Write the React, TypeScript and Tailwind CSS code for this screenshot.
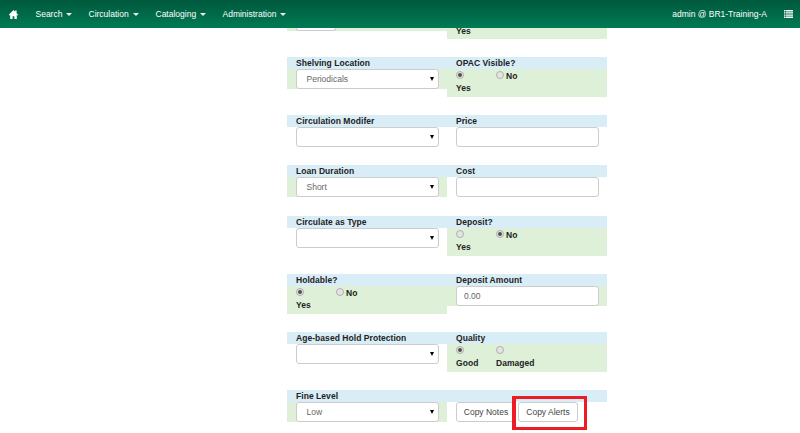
import React from "react";

const labelText = "text-[8.5px] font-bold tracking-[0.05px] text-[#222]";

function Caret() {
  return <span className="mt-px ml-[4px] h-0 w-0 border-x-[3px] border-t-[3px] border-x-transparent border-t-white/90" />;
}

function Menu({ label, width }: { label: string; width: string }) {
  return (
    <a className={`flex shrink-0 items-center ${width}`}>
      {label}
      <Caret />
    </a>
  );
}

function NavBar() {
  return (
    <nav className="flex h-[28px] items-center bg-gradient-to-b from-[#00593d] to-[#007a54] text-[8.5px] leading-[12px] text-white">
      <svg className="ml-[9px] mr-[17.5px] h-[9px] w-[9px] shrink-0" viewBox="0 0 9 9" fill="white">
        <path d="M4.5 0 0 4.6v.6h1.2V9h2.4V6.2h1.8V9h2.4V5.2H9v-.6L7.6 3.2V.6H6.2v1.2z" />
      </svg>
      <Menu label="Search" width="w-[53px]" />
      <Menu label="Circulation" width="w-[67px]" />
      <Menu label="Cataloging" width="w-[67px]" />
      <Menu label="Administration" width="w-[70px]" />
      <span className="mr-[17px] ml-auto">admin @ BR1-Training-A</span>
      <svg className="mr-[7px] h-[8px] w-[9px] shrink-0" viewBox="0 0 9 8" fill="white">
        <path d="M0 0h1.5v1.4H0zM2 0H9v1.4H2zM0 2.2h1.5v1.4H0zM2 2.2H9v1.4H2zM0 4.4h1.5v1.4H0zM2 4.4H9v1.4H2zM0 6.6h1.5V8H0zM2 6.6H9V8H2z" />
      </svg>
    </nav>
  );
}

function Select({ value = "" }: { value?: string }) {
  return (
    <div className="ml-[9px] flex h-[20px] w-[143px] items-center justify-between rounded-[3px] border border-[#ccc] bg-white pr-[4px] pl-[9.5px] text-[8.5px] text-[#666]">
      <span>{value}</span>
      <span className="h-0 w-0 border-x-[2px] border-t-[4px] border-x-transparent border-t-black" />
    </div>
  );
}

function Input({ value = "" }: { value?: string }) {
  return (
    <div className="ml-[9px] flex h-[20px] w-[143px] items-center rounded-[3px] border border-[#ccc] bg-white pl-[7px] text-[8.5px] text-[#666]">
      {value}
    </div>
  );
}

function Radio({ on }: { on?: boolean }) {
  return (
    <span className="flex h-[8px] w-[8px] shrink-0 items-center justify-center rounded-full border border-[#b0b0b0] bg-[#e4e4e4]">
      {on && <span className="h-[4px] w-[4px] rounded-full bg-[#505050]" />}
    </span>
  );
}

function Choice({ first, second, picked, wrap }: { first: string; second: string; picked: number; wrap?: boolean }) {
  return (
    <div className={`h-[28px] pl-[9px] leading-[12px] ${labelText}`}>
      <div className="flex h-[12px] items-start pt-[2px]">
        <span className="w-[40px]"><Radio on={picked === 0} /></span>
        <Radio on={picked === 1} />
        {!wrap && <span className="ml-[2px] leading-[11px]">{second}</span>}
      </div>
      <div className="flex pt-px">
        <span className="w-[40px]">{first}</span>
        {wrap && <span>{second}</span>}
      </div>
    </div>
  );
}

interface Field {
  label: string;
  green?: boolean;
  body: React.ReactNode;
}

function Cell({ label, green, body }: Field) {
  return (
    <div className="w-[160px]">
      <div className={`h-[12px] bg-[#d9edf7] pl-[9px] leading-[12px] ${labelText}`}>{label}</div>
      <div className={green ? "bg-[#dff0d8]" : ""}>{body}</div>
    </div>
  );
}

const rows: { height: string; left: Field; right: Field }[] = [
  {
    height: "h-[58px]",
    left: { label: "Shelving Location", green: true, body: <Select value="Periodicals" /> },
    right: { label: "OPAC Visible?", green: true, body: <Choice first="Yes" second="No" picked={0} /> },
  },
  {
    height: "h-[50px]",
    left: { label: "Circulation Modifer", body: <Select /> },
    right: { label: "Price", body: <Input /> },
  },
  {
    height: "h-[51px]",
    left: { label: "Loan Duration", green: true, body: <Select value="Short" /> },
    right: { label: "Cost", body: <Input /> },
  },
  {
    height: "h-[58px]",
    left: { label: "Circulate as Type", body: <Select /> },
    right: { label: "Deposit?", green: true, body: <Choice first="Yes" second="No" picked={1} /> },
  },
  {
    height: "h-[58px]",
    left: { label: "Holdable?", green: true, body: <Choice first="Yes" second="No" picked={0} /> },
    right: { label: "Deposit Amount", green: true, body: <Input value="0.00" /> },
  },
  {
    height: "h-[58px]",
    left: { label: "Age-based Hold Protection", body: <Select /> },
    right: { label: "Quality", green: true, body: <Choice first="Good" second="Damaged" picked={0} wrap /> },
  },
  {
    height: "h-[43px]",
    left: { label: "Fine Level", green: true, body: <Select value="Low" /> },
    right: {
      label: "",
      body: (
        <div className="flex pl-[9px] text-[8.5px] text-[#444]">
          <button className="h-[20px] w-[60px] rounded-[3px] border border-[#ccc] bg-white whitespace-nowrap">Copy Notes</button>
          <div className="relative ml-[2px]">
            <button className="h-[20px] w-[60px] rounded-[3px] border border-[#ccc] bg-white whitespace-nowrap">Copy Alerts</button>
            <div className="absolute -top-[6px] -left-[6px] h-[34px] w-[75px] border-[3px] border-l-[4px] border-[#ed1c24]" />
          </div>
        </div>
      ),
    },
  },
];

export default function App() {
  return (
    <div className="h-[433px] w-[800px] overflow-hidden bg-white font-['Liberation_Sans',Arial,sans-serif]">
      <NavBar />
      <main className="ml-[287px] w-[320px]">
        <div className="flex h-[29px]">
          <div className="h-[3px] w-[160px] bg-[#dff0d8] pl-[9px]">
            <div className="h-[3px] w-[40px] rounded-b-[3px] border border-t-0 border-[#ccc] bg-white" />
          </div>
          <div className="h-[11px] w-[160px] overflow-hidden bg-[#dff0d8] pl-[9px]">
            <div className={`-mt-[3px] leading-[12px] ${labelText}`}>Yes</div>
          </div>
        </div>
        {rows.map((row) => (
          <div key={row.left.label} className={`flex items-start ${row.height}`}>
            <Cell {...row.left} />
            <Cell {...row.right} />
          </div>
        ))}
      </main>
    </div>
  );
}
